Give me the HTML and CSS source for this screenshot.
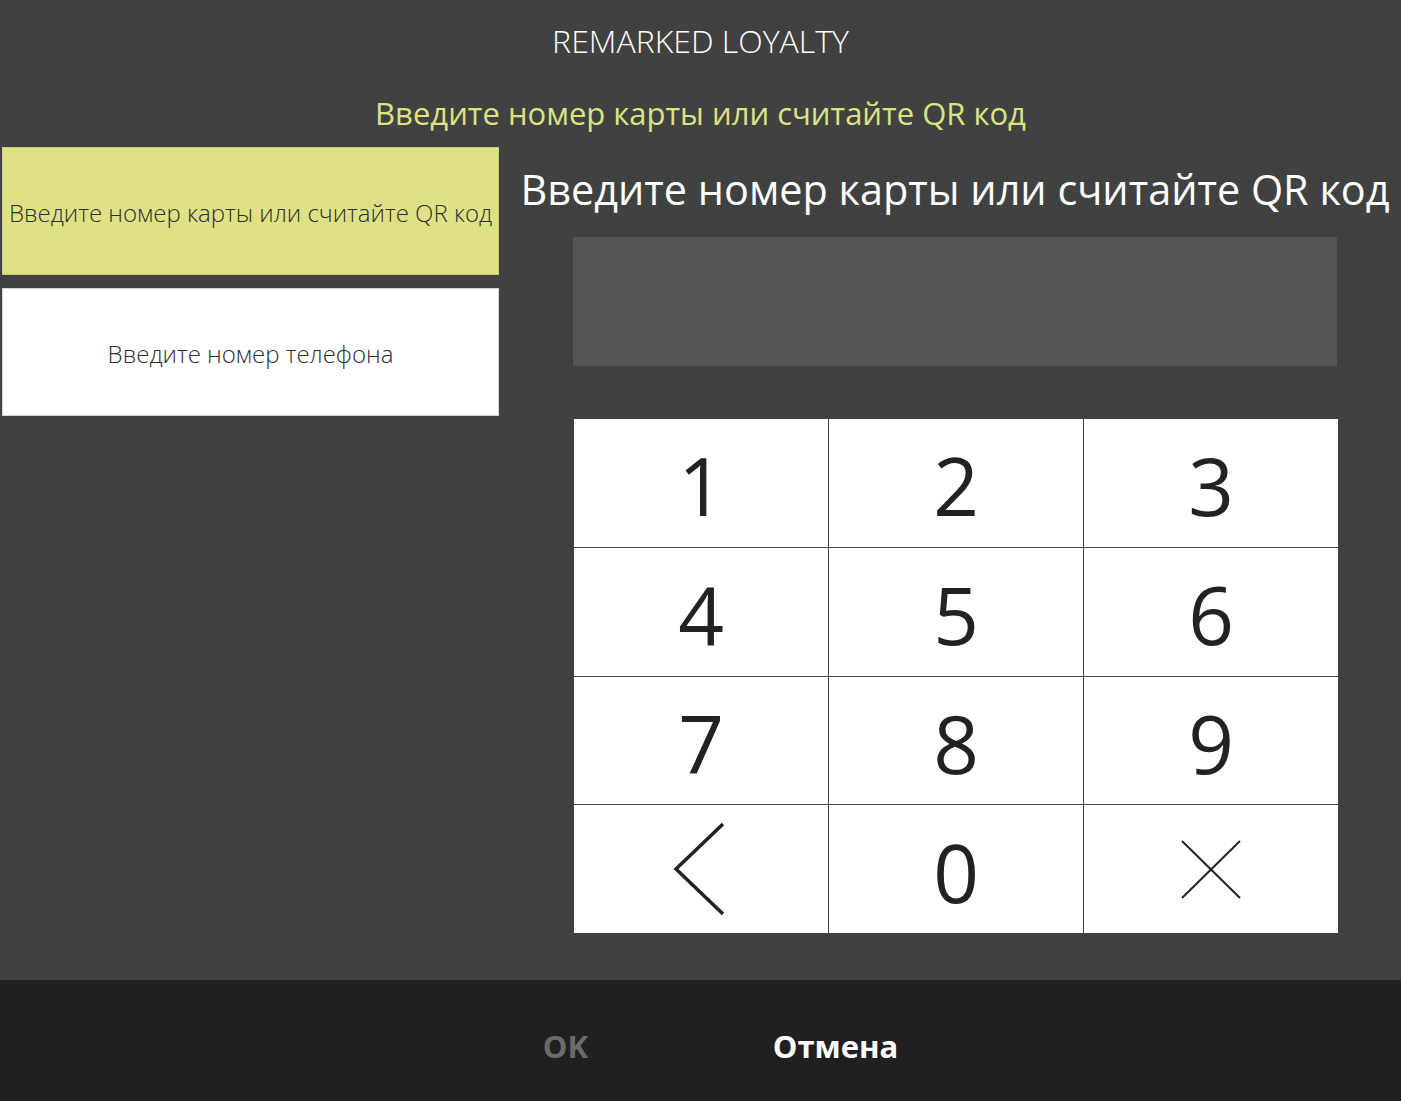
FILE: index.html
```html
<!DOCTYPE html>
<html lang="ru">
<head>
    <meta charset="UTF-8">
    <meta name="viewport" content="width=device-width, initial-scale=1.0">
    <title>REMARKED LOYALTY</title>
    <link rel="stylesheet" href="styles.css">
</head>
<body>
    <div class="app">
        <div class="app-title">REMARKED LOYALTY</div>
        <div class="app-hint">Введите номер карты или считайте QR код</div>

        <div class="content">
            <div class="modes">
                <button class="mode mode-active">Введите номер карты или считайте QR код</button>
                <button class="mode">Введите номер телефона</button>
            </div>

            <div class="entry">
                <div class="entry-title">Введите номер карты или считайте QR код</div>
                <div class="entry-field"></div>

                <div class="keypad">
                    <button class="key">1</button>
                    <button class="key">2</button>
                    <button class="key">3</button>
                    <button class="key">4</button>
                    <button class="key">5</button>
                    <button class="key">6</button>
                    <button class="key">7</button>
                    <button class="key">8</button>
                    <button class="key">9</button>
                    <button class="key key-icon">
                        <svg width="60" height="100" viewBox="0 0 60 100">
                            <polyline points="52,5 5,50 52,95" fill="none" stroke="#222" stroke-width="3.5"/>
                        </svg>
                    </button>
                    <button class="key">0</button>
                    <button class="key key-icon">
                        <svg width="64" height="64" viewBox="0 0 64 64">
                            <line x1="3" y1="4" x2="61" y2="61" stroke="#222" stroke-width="2"/>
                            <line x1="61" y1="4" x2="3" y2="61" stroke="#222" stroke-width="2"/>
                        </svg>
                    </button>
                </div>
            </div>
        </div>

        <div class="footer">
            <button class="footer-btn footer-btn-disabled">OK</button>
            <button class="footer-btn">Отмена</button>
        </div>
    </div>
</body>
</html>
```

FILE: styles.css
```css
body {
    margin: 0;
    padding: 0;
    background-color: #404241;
    font-family: "Open Sans", "Noto Sans", sans-serif;
    overflow: hidden;
}
button {
    font-family: inherit;
    cursor: pointer;
}
.app {
    height: 100vh;
    display: flex;
    flex-direction: column;
}
.app-title {
    margin-top: 21px;
    height: 40px;
    line-height: 40px;
    text-align: center;
    color: #ffffff;
    font-size: 32px;
    font-weight: 300;
}
.app-hint {
    margin-top: 32px;
    height: 40px;
    line-height: 40px;
    text-align: center;
    color: #dde283;
    font-size: 31px;
}
.content {
    margin-top: 14px;
    display: grid;
    grid-template-columns: 509px 1fr;
}
.modes {
    padding-left: 2px;
    display: flex;
    flex-direction: column;
    gap: 13px;
}
.mode {
    width: 497px;
    height: 128px;
    padding: 3px 0 0;
    border: 1px solid #d4d4d4;
    background-color: #ffffff;
    color: #2e2e2e;
    font-size: 24px;
    font-weight: 300;
}
.mode-active {
    background-color: #dfe284;
    border-color: #c9cc78;
}
.entry {
    display: flex;
    flex-direction: column;
    align-items: center;
}
.entry-title {
    margin-top: 18px;
    height: 48px;
    line-height: 48px;
    color: #ffffff;
    font-size: 41.4px;
    white-space: nowrap;
}
.entry-field {
    margin-top: 24px;
    width: 764px;
    height: 129px;
    background-color: #555555;
}
.keypad {
    margin-top: 53px;
    margin-left: 2px;
    width: 764px;
    height: 514px;
    display: grid;
    grid-template-columns: repeat(3, 1fr);
    grid-template-rows: repeat(4, 1fr);
    gap: 1px;
    background-color: #444444;
}
.key {
    border: none;
    padding: 4px 0 0;
    background-color: #ffffff;
    color: #222222;
    font-size: 80px;
    font-weight: 400;
    display: flex;
    align-items: center;
    justify-content: center;
}
.key-icon {
    padding: 0;
}
.footer {
    margin-top: auto;
    height: 121px;
    background-color: #202020;
    display: flex;
    justify-content: center;
    align-items: center;
}
.footer-btn {
    width: 270px;
    height: 80px;
    padding: 10px 0 0;
    border: none;
    background: none;
    color: #ffffff;
    font-size: 31px;
    font-weight: 700;
}
.footer-btn-disabled {
    color: #6b6b6b;
}
```
